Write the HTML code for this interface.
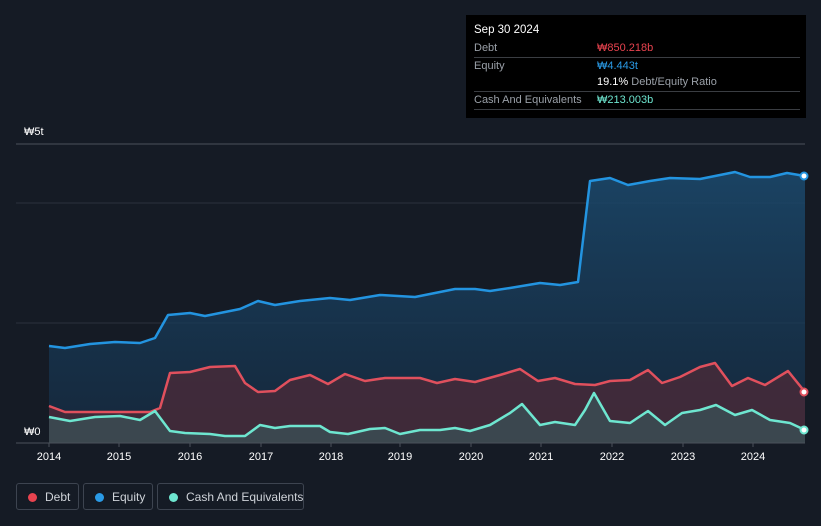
<!DOCTYPE html>
<html><head><meta charset="utf-8"><style>
html,body{margin:0;overflow:hidden}
body{background:#151b25;width:821px;height:526px;font-family:"Liberation Sans","Noto Sans CJK KR",sans-serif;position:relative}
.tt{position:absolute;left:466px;top:15px;width:340px;height:103px;background:#000;color:#fff;font-size:11px}
.tt .r{position:absolute;left:8px;right:6px;height:17px;border-bottom:1px solid #3a3d42;line-height:17px}
.tt .l{color:#9aa0a8;position:absolute;left:0}
.tt .v{position:absolute;left:123px;white-space:nowrap}
.leg{position:absolute;top:483px;height:27px;border:1px solid #3d4450;border-radius:3px;color:#cfd3d9;font-size:12px;line-height:27px;box-sizing:border-box;white-space:nowrap}
.leg i{position:absolute;left:11px;top:9px;width:9px;height:9px;border-radius:50%}
</style></head><body>
<svg width="821" height="526" style="position:absolute;left:0;top:0">
<defs>
<linearGradient id="ge" x1="0" y1="0" x2="0" y2="1"><stop offset="0" stop-color="#1b4a6e" stop-opacity=".85"/><stop offset="1" stop-color="#15304a" stop-opacity=".6"/></linearGradient>
</defs>
<g stroke="#2b323d" stroke-width="1">
<line x1="16" y1="144" x2="805" y2="144" stroke="#4a505a"/>
<line x1="16" y1="203" x2="805" y2="203"/>
<line x1="16" y1="323" x2="805" y2="323"/>
</g>
<polygon fill="url(#ge)" points="49,443 49,346 65,348 90,344 115,342 140,343 155,338 168,315 190,313 205,316 220,313 240,309 258,301 275,305 300,301 330,298 350,300 380,295 415,297 435,293 455,289 475,289 490,291 510,288 540,283 560,285 578,282 590,181 610,178 628,185 650,181 670,178 700,179 735,172 750,177 770,177 787,173 805,176 805,443"/>
<polygon fill="#4a2a38" opacity=".8" points="49,443 49,406 65,412 150,412 160,408 170,373 190,372 210,367 235,366 245,383 258,392 275,391 290,380 310,375 328,384 345,374 365,381 385,378 420,378 437,383 455,379 475,382 500,375 520,369 538,381 555,378 575,384 595,385 610,381 630,380 648,370 662,383 680,377 700,367 715,363 732,386 748,378 765,385 788,371 805,392 805,443"/>
<polygon fill="#3a5458" opacity=".7" points="49,443 49,417 70,421 95,417 120,416 140,420 155,411 170,431 185,433 210,434 225,436 245,436 260,425 275,428 290,426 320,426 330,432 348,434 370,429 385,428 400,434 420,430 440,430 455,428 470,431 490,425 510,413 522,404 540,425 555,422 575,425 585,410 594,393 610,421 630,423 648,411 665,425 682,413 700,410 716,405 735,415 752,410 770,420 790,423 805,430 805,443"/>
<g fill="none" stroke-width="2.5" stroke-linejoin="round">
<polyline stroke="#2394e0" points="49,346 65,348 90,344 115,342 140,343 155,338 168,315 190,313 205,316 220,313 240,309 258,301 275,305 300,301 330,298 350,300 380,295 415,297 435,293 455,289 475,289 490,291 510,288 540,283 560,285 578,282 590,181 610,178 628,185 650,181 670,178 700,179 735,172 750,177 770,177 787,173 805,176"/>
<polyline stroke="#e0505d" points="49,406 65,412 150,412 160,408 170,373 190,372 210,367 235,366 245,383 258,392 275,391 290,380 310,375 328,384 345,374 365,381 385,378 420,378 437,383 455,379 475,382 500,375 520,369 538,381 555,378 575,384 595,385 610,381 630,380 648,370 662,383 680,377 700,367 715,363 732,386 748,378 765,385 788,371 805,392"/>
<polyline stroke="#6ee6d0" points="49,417 70,421 95,417 120,416 140,420 155,411 170,431 185,433 210,434 225,436 245,436 260,425 275,428 290,426 320,426 330,432 348,434 370,429 385,428 400,434 420,430 440,430 455,428 470,431 490,425 510,413 522,404 540,425 555,422 575,425 585,410 594,393 610,421 630,423 648,411 665,425 682,413 700,410 716,405 735,415 752,410 770,420 790,423 805,430"/>
</g>
<circle cx="804" cy="176" r="3.5" fill="#fff" stroke="#2394e0" stroke-width="2"/>
<circle cx="804" cy="392" r="3.5" fill="#fff" stroke="#e0505d" stroke-width="2"/>
<circle cx="804" cy="430" r="3.5" fill="#fff" stroke="#6ee6d0" stroke-width="2"/>
<line x1="16" y1="443" x2="805" y2="443" stroke="#4a505a"/>
<g stroke="#4a505a"><line x1="49" y1="443" x2="49" y2="447"/><line x1="119" y1="443" x2="119" y2="447"/><line x1="190" y1="443" x2="190" y2="447"/><line x1="261" y1="443" x2="261" y2="447"/><line x1="331" y1="443" x2="331" y2="447"/><line x1="400" y1="443" x2="400" y2="447"/><line x1="471" y1="443" x2="471" y2="447"/><line x1="541" y1="443" x2="541" y2="447"/><line x1="612" y1="443" x2="612" y2="447"/><line x1="683" y1="443" x2="683" y2="447"/><line x1="753" y1="443" x2="753" y2="447"/></g>
<g fill="#fff" font-size="11" text-anchor="middle" font-family="Liberation Sans, sans-serif">
<text x="49" y="460">2014</text><text x="119" y="460">2015</text><text x="190" y="460">2016</text><text x="261" y="460">2017</text><text x="331" y="460">2018</text><text x="400" y="460">2019</text><text x="471" y="460">2020</text><text x="541" y="460">2021</text><text x="612" y="460">2022</text><text x="683" y="460">2023</text><text x="753" y="460">2024</text>
</g>
<text x="24" y="135" fill="#fff" font-size="11" font-family="Liberation Sans, Noto Sans CJK KR, sans-serif">₩5t</text>
<text x="24" y="435" fill="#fff" font-size="11" font-family="Liberation Sans, Noto Sans CJK KR, sans-serif">₩0</text>
</svg>
<div class="tt">
<div style="position:absolute;left:8px;top:9px;font-size:11.5px">Sep 30 2024</div>
<div class="r" style="top:25px"><span class="l">Debt</span><span class="v" style="color:#e8434f">₩850.218b</span></div>
<div class="r" style="top:43px;border:none"><span class="l">Equity</span><span class="v" style="color:#2a9ae6">₩4.443t</span></div>
<div class="r" style="top:59px"><span class="v"><b style="font-weight:normal;color:#fff">19.1%</b> <span style="color:#9aa0a8">Debt/Equity Ratio</span></span></div>
<div class="r" style="top:77px"><span class="l">Cash And Equivalents</span><span class="v" style="color:#6ee6d0">₩213.003b</span></div>
</div>
<div class="leg" style="left:16px;width:63px"><i style="background:#e8434f"></i><span style="position:absolute;left:28px">Debt</span></div>
<div class="leg" style="left:83px;width:70px"><i style="background:#2a9ae6"></i><span style="position:absolute;left:28px">Equity</span></div>
<div class="leg" style="left:157px;width:147px"><i style="background:#6ee6d0"></i><span style="position:absolute;left:28px">Cash And Equivalents</span></div>
</body></html>
